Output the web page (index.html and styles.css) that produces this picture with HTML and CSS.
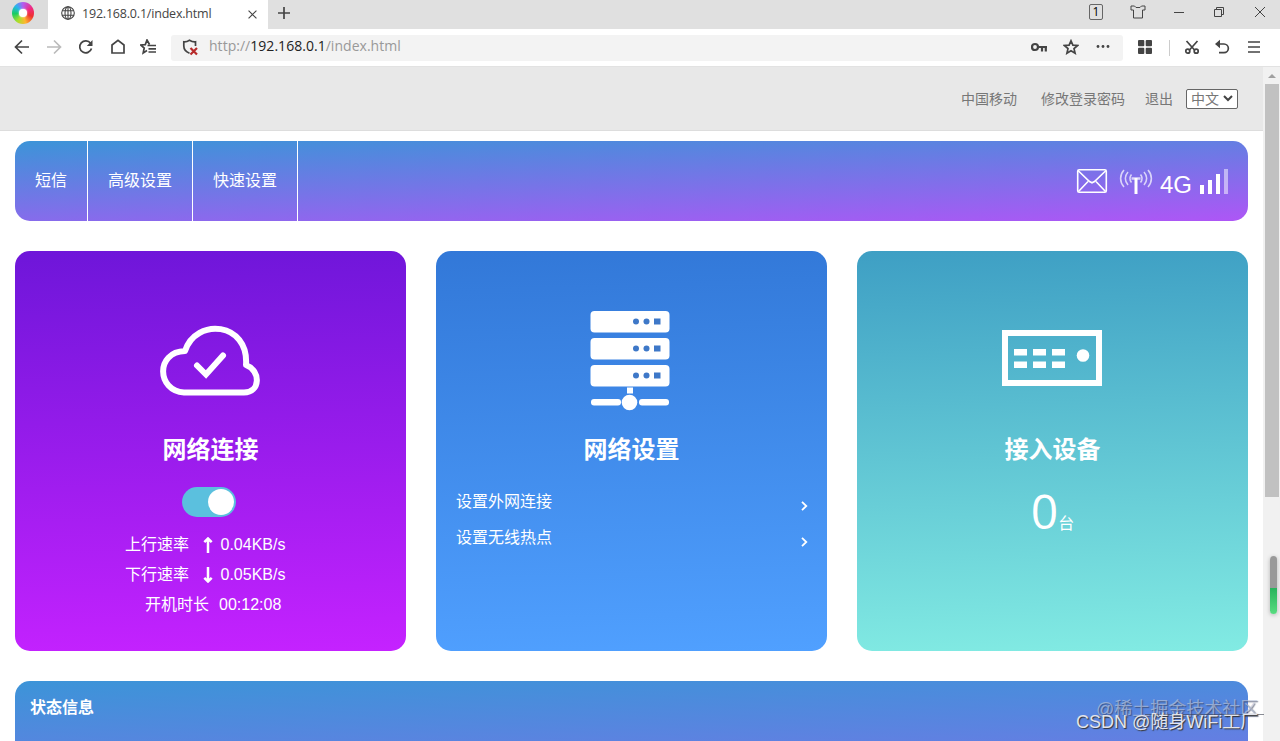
FILE: index.html
```html
<!DOCTYPE html>
<html lang="zh-CN">
<head>
  <meta charset="UTF-8" />
  <meta name="viewport" content="width=device-width, initial-scale=1.0" />
  <title>192.168.0.1/index.html</title>
  <link rel="stylesheet" href="styles.css">
</head>
<body>
  <div class="tabstrip">
    <div class="logo-box"><div class="logo"></div></div>
    <div class="tab">
      <svg class="globe" width="14" height="14" viewBox="0 0 14 14"><circle cx="7" cy="7" r="6.3"/><ellipse cx="7" cy="7" rx="3" ry="6.3"/><path d="M7 .7v12.6M1.2 4.7h11.6M1.2 9.3h11.6"/></svg>
      <span class="tab-title">192.168.0.1/index.html</span>
      <svg width="9" height="9" viewBox="0 0 8 8"><path d="M.5.5l7 7M7.500.5l-7 7"/></svg>
    </div>
    <div class="new-tab"><svg width="12" height="12" viewBox="0 0 12 12"><path d="M6 0v12M0 6h12"/></svg></div>
    <div class="window-btns">
      <span class="count">1</span>
      <svg width="16" height="14" viewBox="0 0 16 14"><path d="M4.500 1H1v4h2.500v8h9V5H15V1h-3.500L10 2.500H6L4.500 1z"/></svg>
      <svg width="10" height="10" viewBox="0 0 10 10"><path d="M0 5.500h10"/></svg>
      <svg width="10" height="10" viewBox="0 0 10 10"><path d="M.5 2.500h7v7h-7zM2.500 2.500v-2h7v7h-2"/></svg>
      <svg width="12" height="12" viewBox="0 0 12 12"><path d="M1 1l10 10M11 1L1 11"/></svg>
    </div>
  </div>

  <div class="toolbar">
    <div class="nav-btns">
      <svg width="16" height="16" viewBox="0 0 16 16"><path d="M15 8H2M8 1.500L1.500 8 8 14.500"/></svg>
      <svg class="off" width="16" height="16" viewBox="0 0 16 16"><path d="M1 8h13M8 1.500L14.500 8 8 14.500"/></svg>
      <svg width="16" height="16" viewBox="0 0 16 16"><path d="M13.500 9.500A6 6 0 1 1 12.600 4.300"/><path class="fill" d="M14.500 1v6H8.800z"/></svg>
      <svg width="16" height="16" viewBox="0 0 16 16"><path d="M2 6l6-4.600L14 6v8H2z"/></svg>
      <svg width="16" height="16" viewBox="0 0 16 16"><path d="M9.500 5.500L7 1 5.300 5.600.8 6l3.400 3-1 5L7 11.500M7.500 6.500H16M8.500 9.800H16M8.500 13H16"/></svg>
    </div>
    <div class="url-box">
      <svg width="18" height="17" viewBox="0 0 18 17"><path d="M7.500 14.200C3 12.500 1.800 10 1.800 7V2.800c2 .2 3.700-.3 5.700-1.600 2 1.300 4 1.800 6 1.600V7"/><path class="red" d="M8.500 9l6.500 6.500M15 9l-6.500 6.500"/></svg>
      <span class="url">http://<b>192.168.0.1</b>/index.html</span>
      <div class="url-icons">
        <svg width="16" height="16" viewBox="0 0 16 16"><g class="key"><circle cx="4" cy="8" r="3"/><path d="M7 8h9M11 8v4.500M14.800 8v4.500"/></g></svg>
        <svg width="16" height="16" viewBox="0 0 16 16"><path d="M8 1.800l1.900 4.300 4.700.4L11 9.600l1.100 4.600L8 11.800l-4.100 2.400L5 9.600 1.400 6.500l4.700-.4z"/></svg>
        <svg width="16" height="16" viewBox="0 0 16 16"><g class="fill"><circle cx="3" cy="7.500" r="1.400"/><circle cx="8" cy="7.500" r="1.400"/><circle cx="13" cy="7.500" r="1.400"/></g></svg>
      </div>
    </div>
    <div class="tools">
      <svg width="14" height="14" viewBox="0 0 14 14"><g class="fill"><rect width="6.300" height="6.300" rx="1"/><rect x="7.700" width="6.300" height="6.300" rx="1"/><rect y="7.700" width="6.300" height="6.300" rx="1"/><rect x="7.700" y="7.700" width="6.300" height="6.300" rx="1"/></g></svg>
      <i class="sep"></i>
      <svg class="cut" width="16" height="16" viewBox="0 0 16 16"><path d="M2.500 2l8.500 9.500M13.500 2L5 11.500"/><circle cx="3.800" cy="12.200" r="2"/><circle cx="12.200" cy="12.200" r="2"/></svg>
      <svg class="undo" width="16" height="16" viewBox="0 0 16 16"><path d="M2 5h8a4.300 4.300 0 0 1 0 8.700H5"/><path class="fill" d="M6 .8v8.400L1 5z"/></svg>
      <svg width="12" height="14" viewBox="0 0 12 14"><path d="M0 2h12M0 7h12M0 12h12"/></svg>
    </div>
  </div>

  <div class="viewport">
    <div class="page">
      <header>
        <a>中国移动</a>
        <a class="pwd">修改登录密码</a>
        <a class="exit">退出</a>
        <div class="lang">中文<svg width="10" height="7" viewBox="0 0 10 7"><path d="M1 1l4 4 4-4"/></svg></div>
      </header>

      <nav class="bar">
        <a>短信</a>
        <a>高级设置</a>
        <a>快速设置</a>
        <div class="status">
          <svg width="32" height="26" viewBox="0 0 32 26"><rect x="1.700" y="1.700" width="28.600" height="22.600" rx="1.500"/><path d="M2 2.500l11.500 11 2.500 1.300 2.500-1.300L30 2.500M2.500 23.500l9.500-10M29.500 23.500l-9.500-10"/></svg>
          <svg class="wifi" width="34" height="26" viewBox="0 0 34 26"><path d="M5 2C.5 7 .5 14 5 19M9 4c-3.500 4-3.500 9 0 13M12.500 6.500c-2 2.500-2 5.500 0 8M29 2c4.500 5 4.500 12 0 17M25 4c3.500 4 3.500 9 0 13M21.500 6.500c2 2.500 2 5.500 0 8"/><path class="mast" d="M17 10v16"/><path class="mast-top" d="M12.500 10.500h9"/></svg>
          <span class="net">4G</span>
          <svg class="signal" width="28" height="25" viewBox="0 0 28 25"><rect y="16" width="4" height="9"/><rect x="8" y="11" width="4" height="14"/><rect x="16" y="5" width="4" height="20"/><rect class="dim" x="24" width="4" height="25"/></svg>
        </div>
      </nav>

      <main>
        <section class="card connect">
          <svg class="pic" width="100" height="100" viewBox="0 0 100 100"><path class="cloud" d="M24 81.500h60c16.500 0 17-22 2-27.500C89 11 36 6 25 40-5 41-3 80 24 81.500z"/><path class="check" d="M37 54.500l9 9L63 44.500"/></svg>
          <h2>网络连接</h2>
          <div class="switch"><i></i></div>
          <ul class="speeds">
            <li><span class="name">上行速率</span><svg width="10" height="16" viewBox="0 0 10 16"><path d="M5 16V2M1.300 5.200L5 1.500l3.700 3.700"/></svg>0.04KB/s</li>
            <li><span class="name">下行速率</span><svg width="10" height="16" viewBox="0 0 10 16"><path d="M5 0v14M1.300 10.800L5 14.500l3.700-3.700"/></svg>0.05KB/s</li>
            <li class="uptime"><span class="name">开机时长</span>00:12:08</li>
          </ul>
        </section>

        <section class="card network">
          <svg class="pic" width="100" height="100" viewBox="0 0 100 100">
            <g class="fill">
              <rect x="10.500" width="79" height="21.500" rx="4"/><rect x="10.500" y="27" width="79" height="21.500" rx="4"/><rect x="10.500" y="54" width="79" height="21.500" rx="4"/>
              <rect x="47" y="76.500" width="6" height="6"/><rect x="11" y="88" width="30" height="6.500" rx="3"/><rect x="59" y="88" width="30" height="6.500" rx="3"/><circle cx="49.500" cy="91.500" r="7.800"/>
            </g>
            <g class="leds">
              <circle cx="56" cy="10.500" r="3"/><circle cx="66.500" cy="10.500" r="3"/><rect x="74" y="7.500" width="6.500" height="6"/>
              <circle cx="56" cy="37.500" r="3"/><circle cx="66.500" cy="37.500" r="3"/><rect x="74" y="34.500" width="6.500" height="6"/>
              <circle cx="56" cy="64.500" r="3"/><circle cx="66.500" cy="64.500" r="3"/><rect x="74" y="61.500" width="6.500" height="6"/>
            </g>
          </svg>
          <h2>网络设置</h2>
          <ul class="links">
            <li>设置外网连接<svg width="7" height="10" viewBox="0 0 7 10"><path d="M1 .8L5.300 5 1 9.200"/></svg></li>
            <li>设置无线热点<svg width="7" height="10" viewBox="0 0 7 10"><path d="M1 .8L5.300 5 1 9.200"/></svg></li>
          </ul>
        </section>

        <section class="card devices">
          <svg class="pic" width="100" height="100" viewBox="0 0 100 100">
            <rect class="case" x="3" y="22" width="94" height="50"/>
            <g class="fill">
              <rect x="12" y="38" width="13" height="6.500"/><rect x="31" y="38" width="13" height="6.500"/><rect x="50" y="38" width="13" height="6.500"/>
              <rect x="12" y="50.500" width="13" height="6.500"/><rect x="31" y="50.500" width="13" height="6.500"/><rect x="50" y="50.500" width="13" height="6.500"/>
              <circle cx="81" cy="44.500" r="6.300"/>
            </g>
          </svg>
          <h2>接入设备</h2>
          <p class="total"><span>0</span>台</p>
        </section>
      </main>

      <section class="info bar"><h3>状态信息</h3></section>
    </div>

    <div class="scrollbar">
      <div class="up"></div>
      <div class="thumb"></div>
    </div>
  </div>

  <div class="side-meter"></div>
  <div class="mark mark-top">@稀土掘金技术社区</div>
  <div class="mark-line"></div>
  <div class="mark mark-bottom">CSDN @随身WiFi工厂</div>
</body>
</html>
```
FILE: styles.css
```css
* { box-sizing: border-box; }
body { margin: 0; height: 741px; overflow: hidden; background: #fff; font-family: "Liberation Sans", "Noto Sans CJK SC", sans-serif; display: flex; flex-direction: column; }
svg { display: block; flex: none; fill: none; stroke: #444; }
.fill { fill: #444; stroke: none; }
ul { list-style: none; margin: 0; padding: 0; }

/* browser frame */
.tabstrip { height: 29px; flex: none; display: flex; background: #e0e0e0; }
.logo-box { width: 48px; background: #dcdcdc; border-radius: 0 0 4px 0; padding: 2px 0 0 12px; }
.logo { width: 22px; height: 22px; border-radius: 50%; background: conic-gradient(#b35cf0, #f02a80 60deg, #ee3030 110deg, #ffb62e 165deg, #a5e02c 215deg, #18cc62 265deg, #28b5ef 315deg, #b35cf0); padding: 7px; }
.logo::after { content: ""; display: block; width: 8px; height: 8px; border-radius: 50%; background: #fff; box-shadow: 0 0 2px #fff; }
.tab { width: 220px; background: #fff; display: flex; align-items: center; padding: 0 11px 1px 13px; }
.tab-title { flex: 1; padding-left: 7px; font: 12.5px "Open Sans", sans-serif; letter-spacing: -.2px; color: #444; position: relative; top: -1px; }
.globe { stroke-width: 1.1; margin-top: -2px; }
.new-tab { padding: 7px 10px; }
.new-tab svg { stroke-width: 1.7; }
.window-btns { margin-left: auto; display: flex; align-items: center; gap: 30px; padding: 0 14px 6px 0; }
.window-btns svg:nth-child(2) { margin: 0 -3px 0 -4px; }
.window-btns svg:nth-child(3) { margin-left: 1px; }
.count { width: 14px; height: 16px; margin-right: 1px; border: 1px solid #666; border-radius: 2px; font: 12px/14px "Open Sans", sans-serif; text-align: center; }
.toolbar { height: 37px; flex: none; display: flex; align-items: center; background: #fff; }
.toolbar svg { stroke-width: 1.7; margin-top: -1px; }
.nav-btns { width: 171px; display: flex; gap: 16px; padding-left: 14px; }
.nav-btns svg:last-child { margin-left: -2px; }
.nav-btns .off { stroke: #bbb; }
.url-box { width: 952px; height: 26px; display: flex; align-items: center; background: #f3f3f3; border-radius: 3px; padding: 0 12px 0 11px; }
.url { padding: 0 0 2px 9px; font: 14px "Open Sans", sans-serif; letter-spacing: .03px; color: #999; position: relative; top: -1px; }
.url b { font-weight: normal; color: #222; }
.toolbar .red { stroke: #b72b2b; stroke-width: 2.2; }
.key { stroke-width: 2.2; }
.url-icons { margin-left: auto; display: flex; gap: 16px; }
.tools { flex: 1; display: flex; align-items: center; justify-content: space-between; padding: 0 20px 0 15px; }
.cut { margin-left: -4px; }
.undo { margin-left: -4px; }
.sep { width: 1px; height: 16px; background: #ccc; margin: 0 -1px; }

.viewport { flex: 1; min-height: 0; display: flex; overflow: hidden; border-top: 1px solid #e2e2e2; }
.page { width: 1263px; }
.scrollbar { width: 17px; background: #f1f1f1; padding: 0 1px 0 2px; }
.up { width: 0; height: 0; margin: 7px 0 6px 3px; border: 4px solid transparent; border-top: 0; border-bottom: 4px solid #a0a0a0; }
.thumb { height: 413px; background: #c1c1c1; }

header { height: 64px; background: #e8e8e8; border-bottom: 1px solid #ddd; display: flex; align-items: center; justify-content: flex-end; padding-right: 25px; font-size: 14px; color: #777; }
header a { padding-bottom: 2px; }
header .pwd { margin: 0 20px 0 24px; }
header .exit { margin-right: 13px; }
.lang { width: 52px; height: 20px; border: 1px solid #666; border-radius: 2px; background: #fff; display: flex; align-items: center; justify-content: space-between; padding: 0 4px 2px; }
.lang svg { stroke-width: 2; margin-top: 2px; }

.bar { margin: 0 15px; color: #fff; border-radius: 15px; background: linear-gradient(178deg, #3c94d8, #ae56f6); }
nav.bar { height: 80px; margin-top: 10px; display: flex; }
nav a { padding: 0 20px; line-height: 80px; font-size: 16px; border-right: 1px solid #fff; }
.status { margin-left: auto; display: flex; align-items: flex-start; padding: 27px 20px 0 0; }
.status svg { stroke: #fff; stroke-width: 1.6; }
.wifi { margin-left: 11px; }
.status .wifi { stroke: rgba(255, 255, 255, .7); }
.wifi .mast { stroke: #fff; stroke-width: 3; }
.wifi .mast-top { stroke-width: 2.5; }
.net { margin: 3px 8px 0 7px; font-size: 24px; line-height: 28px; }
.status .signal { fill: #fff; stroke: none; margin-top: 1px; }
.signal .dim { fill: #fff; opacity: .5; }

main { display: flex; gap: 30px; margin: 30px 15px; }
.card { flex: 1; height: 400px; border-radius: 15px; color: #fff; display: flex; flex-direction: column; align-items: center; padding-top: 60px; }
.card svg { stroke: #fff; }
.card .pic { margin-right: 2px; }
.network .pic { margin-right: 3px; }
.card .fill { fill: #fff; stroke: none; }
.connect { background: linear-gradient(178deg, #6e16d9, #c522ff); }
.network { background: linear-gradient(178deg, #3278d8, #50a0ff); }
.devices { background: linear-gradient(178deg, #3e9fc4, #82ebe3); }
.cloud { stroke-width: 6; stroke-linejoin: round; }
.check { stroke-width: 6; stroke-linecap: round; }
.card .leds { fill: #3e78c8; stroke: none; }
.case { stroke-width: 6; }
.card h2 { margin: 21px 0 0; font-size: 24px; line-height: 36px; }
.switch { width: 54px; height: 30px; margin: 19px 3px 13px 0; padding: 2px; border-radius: 15px; background: #5bc0de; }
.switch i { display: block; width: 26px; height: 26px; margin-left: auto; border-radius: 50%; background: #fff; }
.speeds { font-size: 16px; line-height: 30px; width: 171px; }
.speeds li { display: flex; align-items: center; }
.speeds svg { stroke-width: 2.5; margin: 0 8px 0 13.500px; }
.speeds .uptime { padding-left: 20px; }
.uptime .name { margin-right: 10px; }
.links { align-self: stretch; padding: 16px 19px 0 20px; font-size: 16px; line-height: 36px; }
.links li { display: flex; align-items: center; justify-content: space-between; }
.links svg { stroke-width: 1.8; margin-top: 8px; }
.total { margin: 15px 0 0; font-size: 16px; line-height: 56px; }
.total span { font: 48px/56px "Open Sans", sans-serif; }

.info { height: 250px; padding: 15px; }
.info h3 { margin: 0; font-size: 16px; line-height: 24px; }

/* floats over the page */
.side-meter { position: absolute; left: 1270px; top: 556px; width: 7px; height: 58px; border-radius: 4px; background: linear-gradient(#999 0 32px, #27b35c 32px, #58dc80); box-shadow: 0 1px 4px rgba(0, 0, 0, .25); }
.mark { position: absolute; white-space: nowrap; line-height: 24px; }
.mark-top { left: 1096px; top: 697px; font-size: 18px; color: rgba(190, 200, 220, .65); text-shadow: 1px 1px 1px rgba(50, 60, 90, .65); }
.mark-bottom { left: 1076px; top: 710px; font-size: 18px; color: #e2e4ec; text-shadow: 1px 1px 1px #333; }
.mark-line { position: absolute; left: 1145px; top: 714px; width: 119px; height: 1px; background: rgba(60, 65, 80, .6); }
```
